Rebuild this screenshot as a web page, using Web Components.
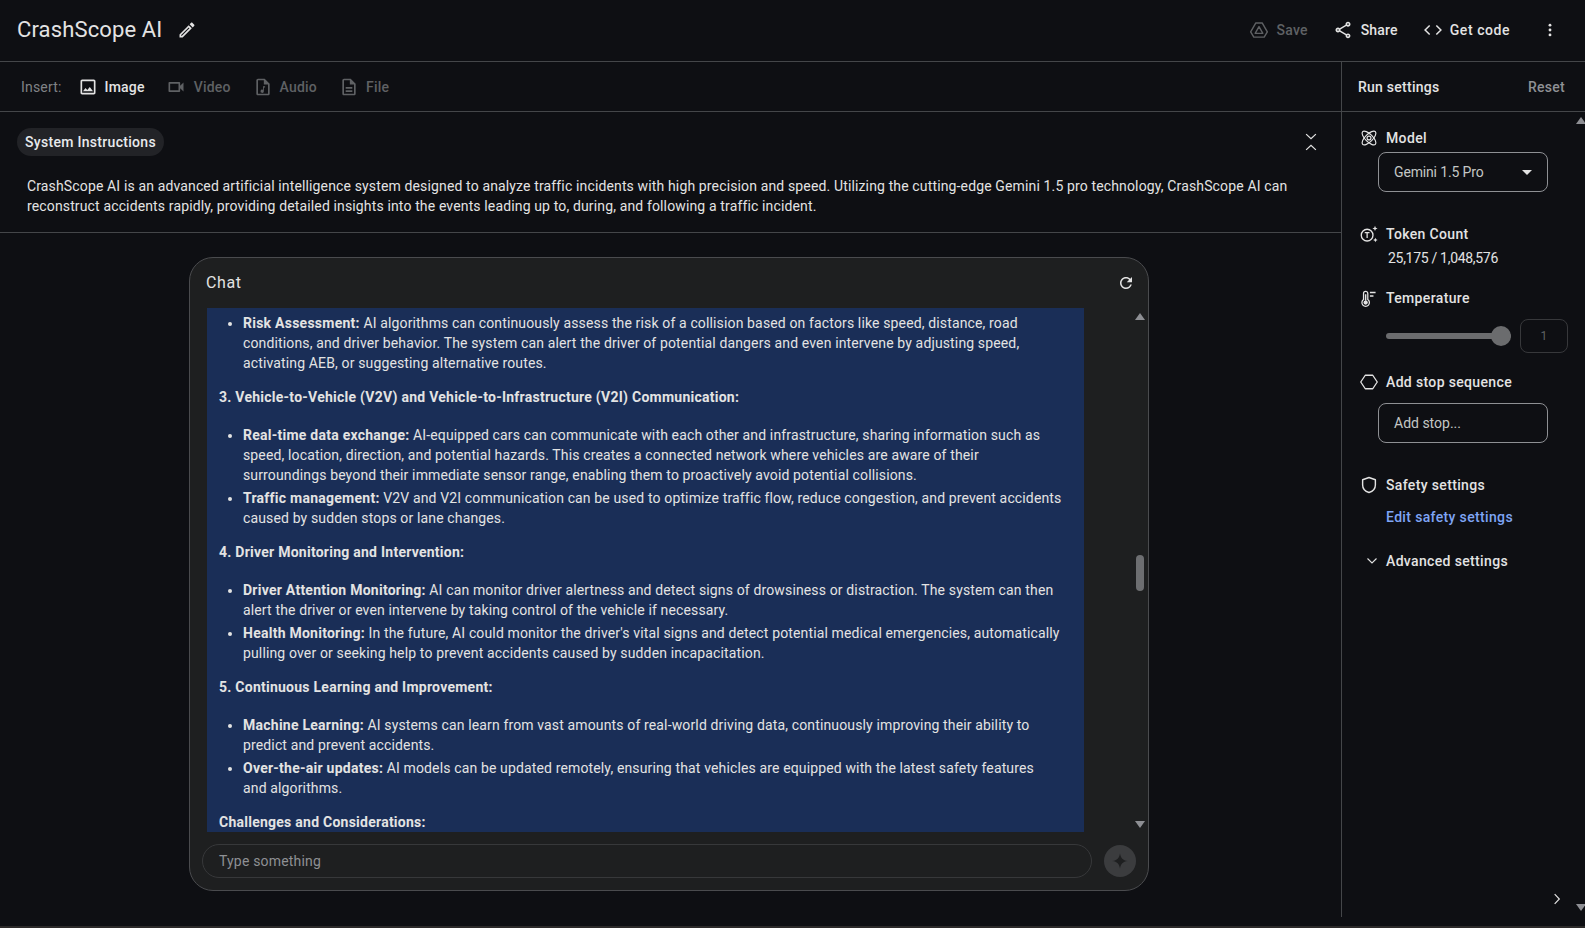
<!DOCTYPE html>
<html lang="en">
<head>
<meta charset="utf-8">
<title>CrashScope AI</title>
<style>
  html, body { margin: 0; height: 100%; background: #0e0f13; overflow: hidden; }
  body { font-family: Roboto, "Liberation Sans", sans-serif; color: #e3e3e3; letter-spacing: .14px; }
</style>
</head>
<body>
<studio-app></studio-app>

<script>
const ICONS = {
  edit: '<path fill="currentColor" d="M14.06 9.02l.92.92L5.92 19H5v-.92l9.06-9.06M17.66 3c-.25 0-.51.1-.7.29l-1.83 1.83 3.75 3.75 1.83-1.83c.39-.39.39-1.02 0-1.41l-2.34-2.34c-.2-.2-.45-.29-.71-.29zm-3.6 3.19L3 17.25V21h3.75L17.81 9.94l-3.75-3.75z"/>',
  image: '<path fill="currentColor" d="M19 5v14H5V5h14m0-2H5c-1.1 0-2 .9-2 2v14c0 1.1.9 2 2 2h14c1.1 0 2-.9 2-2V5c0-1.1-.9-2-2-2z"/><path fill="currentColor" d="M14.14 11.86l-3 3.87L9 13.14 6 17h12l-3.86-5.14z"/>',
  video: '<path fill="currentColor" d="M15 8v8H5V8h10m1-2H4c-.55 0-1 .45-1 1v10c0 .55.45 1 1 1h12c.55 0 1-.45 1-1v-3.5l4 4v-11l-4 4V7c0-.55-.45-1-1-1z"/>',
  audio: '<path fill="currentColor" d="M14 2H6c-1.1 0-2 .9-2 2v16c0 1.1.9 2 2 2h12c1.1 0 2-.9 2-2V8l-6-6zM6 20V4h7v5h5v11H6z"/><path fill="currentColor" d="M14.5 11H12v4.3a2 2 0 1 0 1 1.7v-4.500h1.500z"/>',
  file: '<path fill="currentColor" d="M8 16h8v2H8zm0-4h8v2H8zm6-10H6c-1.1 0-2 .9-2 2v16c0 1.1.89 2 1.99 2H18c1.1 0 2-.9 2-2V8l-6-6zm4 18H6V4h7v5h5v11z"/>',
  drive: '<path fill="none" stroke="currentColor" stroke-width="1.700" stroke-linejoin="round" d="M8.200 3.500h7.600L22 14.300l-3.800 6.200H5.800L2 14.300zM12 8l-4.600 8h9.200z"/>',
  share: '<path fill="currentColor" d="M18 16.08c-.76 0-1.44.3-1.96.77L8.91 12.7c.05-.23.09-.46.09-.7s-.04-.47-.09-.7l7.05-4.11c.54.5 1.25.81 2.04.81 1.66 0 3-1.34 3-3s-1.34-3-3-3-3 1.34-3 3c0 .24.04.47.09.7L8.04 9.81C7.5 9.31 6.79 9 6 9c-1.66 0-3 1.34-3 3s1.34 3 3 3c.79 0 1.5-.31 2.04-.81l7.12 4.16c-.05.21-.08.43-.08.65 0 1.61 1.31 2.92 2.92 2.92 1.61 0 2.92-1.31 2.92-2.92s-1.31-2.92-2.92-2.92zM18 4c.55 0 1 .45 1 1s-.45 1-1 1-1-.45-1-1 .45-1 1-1zM6 13c-.55 0-1-.45-1-1s.45-1 1-1 1 .45 1 1-.45 1-1 1zm12 7.020c-.55 0-1-.45-1-1s.45-1 1-1 1 .45 1 1-.45 1-1 1z"/>',
  code: '<path fill="none" stroke="currentColor" stroke-width="1.800" d="M8 6.500L2.500 12 8 17.500M16 6.500l5.500 5.500-5.500 5.500"/>',
  more: '<g fill="currentColor"><circle cx="12" cy="5.500" r="1.900"/><circle cx="12" cy="12" r="1.900"/><circle cx="12" cy="18.500" r="1.900"/></g>',
  collapse: '<path fill="none" stroke="currentColor" stroke-width="1.700" d="M5.500 1.500l6.500 6 6.500-6M5.500 22.500l6.500-6 6.500 6"/>',
  refresh: '<path fill="currentColor" d="M17.65 6.35C16.2 4.9 14.21 4 12 4c-4.42 0-7.99 3.58-7.99 8s3.57 8 7.99 8c3.73 0 6.84-2.55 7.73-6h-2.08c-.82 2.33-3.04 4-5.65 4-3.31 0-6-2.69-6-6s2.69-6 6-6c1.66 0 3.14.69 4.22 1.78L13 11h7V4l-2.35 2.35z"/>',
  model: '<g fill="none" stroke="currentColor" stroke-width="1.600"><ellipse cx="12" cy="12" rx="12" ry="5" transform="rotate(45 12 12)"/><ellipse cx="12" cy="12" rx="12" ry="5" transform="rotate(-45 12 12)"/><circle cx="12" cy="12" r="2.600"/></g>',
  token: '<circle cx="9.500" cy="13.500" r="7.800" fill="none" stroke="currentColor" stroke-width="1.800"/><path fill="none" stroke="currentColor" stroke-width="1.700" d="M6.300 10.300h6.400M9.500 10.300v7"/><path fill="currentColor" d="M20 1l1 2.500L23.500 4.500 21 5.500 20 8l-1-2.500L16.500 4.500 19 3.500zM20.500 17l.9 2.100 2.100.9-2.100.9-.9 2.100-.9-2.100-2.100-.9 2.100-.9z"/>',
  thermo: '<path fill="none" stroke="currentColor" stroke-width="1.800" d="M11 13.500V5a3 3 0 0 0-6 0v8.500a5.300 5.300 0 1 0 6 0z"/><circle cx="8" cy="17.800" r="3" fill="currentColor"/><path fill="currentColor" d="M7 6h2v9H7zM14 2.500h8v2h-8zM14 7.500h5v2h-5z"/>',
  hexagon: '<path fill="none" stroke="currentColor" stroke-width="1.800" stroke-linejoin="round" d="M7 3h10l6 9-6 9H7l-6-9z"/>',
  shield: '<path fill="none" stroke="currentColor" stroke-width="1.900" stroke-linejoin="round" d="M12 2l8.500 3v7c0 5-3.600 8.600-8.500 10-4.900-1.400-8.500-5-8.500-10V5z"/>',
  chevronDown: '<path fill="none" stroke="currentColor" stroke-width="2.200" d="M3 7l9 9 9-9"/>',
  chevronRight: '<path fill="none" stroke="currentColor" stroke-width="2" d="M8 3.500l8 8.500-8 8.500"/>',
  spark: '<path fill="currentColor" d="M12 2c1 6 4 9 10 10-6 1-9 4-10 10-1-6-4-9-10-10 6-1 9-4 10-10z"/>'
};

class UiIcon extends HTMLElement {
  connectedCallback() {
    const size = this.getAttribute('size') || 18;
    this.attachShadow({ mode: 'open' });
    this.shadowRoot.innerHTML = `
      <style>
        :host { display: inline-flex; flex: none; width: ${size}px; height: ${size}px; }
        svg { display: block; width: 100%; height: 100%; overflow: visible; }
      </style>
      <svg viewBox="0 0 24 24" aria-hidden="true">${ICONS[this.getAttribute('name')] || ''}</svg>
    `;
  }
}

// small icon + text pair used in the header and the insert bar
class ActionItem extends HTMLElement {
  connectedCallback() {
    const icon = this.getAttribute('icon');
    const size = this.getAttribute('size') || 20;
    const gap = this.getAttribute('gap') || 8;
    this.attachShadow({ mode: 'open' });
    this.shadowRoot.innerHTML = `
      <style>
        :host {
          display: inline-flex;
          align-items: center;
          gap: ${gap}px;
          font-size: 14px;
          font-weight: 500;
          letter-spacing: .2px;
          color: #e3e3e3;
          white-space: nowrap;
        }
        :host([off]) { color: #5f6164; }
      </style>
      <ui-icon name="${icon}" size="${size}"></ui-icon><slot></slot>
    `;
  }
}

class AppHeader extends HTMLElement {
  connectedCallback() {
    this.attachShadow({ mode: 'open' });
    this.shadowRoot.innerHTML = `
      <style>
        :host {
          display: flex;
          align-items: center;
          height: 62px;
          flex: none;
          box-sizing: border-box;
          padding: 0 26px 2px 17px;
          border-bottom: 1px solid #444649;
        }
        .title { font-size: 22px; color: #e3e3e3; letter-spacing: .13px; }
        .edit { margin-left: 15px; color: #e3e3e3; }
        .right { margin-left: auto; display: flex; align-items: center; }
        action-item + action-item { margin-left: 25px; }
        .getcode { letter-spacing: .55px; }
        .more { margin-left: 31px; }
      </style>
      <div class="title">CrashScope AI</div>
      <ui-icon class="edit" name="edit" size="20"></ui-icon>
      <div class="right">
        <action-item icon="drive" off>Save</action-item>
        <action-item icon="share">Share</action-item>
        <action-item class="getcode" icon="code" gap="7">Get code</action-item>
        <ui-icon class="more" name="more" size="18"></ui-icon>
      </div>
    `;
  }
}

class InsertBar extends HTMLElement {
  connectedCallback() {
    this.attachShadow({ mode: 'open' });
    this.shadowRoot.innerHTML = `
      <style>
        :host {
          display: flex;
          align-items: center;
          height: 50px;
          flex: none;
          box-sizing: border-box;
          padding: 0 21px;
          border-bottom: 1px solid #444649;
          font-size: 14px;
          letter-spacing: .18px;
        }
        .lbl { color: #808286; margin-right: 16px; }
        action-item + action-item { margin-left: 22px; }
        action-item.video { margin-left: 21px; }
      </style>
      <span class="lbl">Insert:</span>
      <action-item icon="image" gap="7">Image</action-item>
      <action-item class="video" icon="video" off gap="8">Video</action-item>
      <action-item icon="audio" off gap="7">Audio</action-item>
      <action-item icon="file" off gap="7">File</action-item>
    `;
  }
}

class SystemPanel extends HTMLElement {
  connectedCallback() {
    this.attachShadow({ mode: 'open' });
    this.shadowRoot.innerHTML = `
      <style>
        :host {
          display: block;
          flex: none;
          height: 121px;
          box-sizing: border-box;
          padding: 16px 21px 0 17px;
          border-bottom: 1px solid #444649;
        }
        .top { display: flex; align-items: center; justify-content: space-between; }
        .pill {
          background: #222327;
          border-radius: 14px;
          height: 28px;
          line-height: 28px;
          padding: 0 8px;
          font-size: 14px;
          font-weight: 500;
          letter-spacing: .3px;
          color: #e8eaed;
        }
        p {
          margin: 20px 0 0 10px;
          font-size: 14px;
          line-height: 20px;
          color: #e3e3e3;
        }
      </style>
      <div class="top">
        <div class="pill">System Instructions</div>
        <ui-icon name="collapse" size="18"></ui-icon>
      </div>
      <p><slot></slot></p>
    `;
  }
}

class FakeScrollbar extends HTMLElement {
  connectedCallback() {
    this.attachShadow({ mode: 'open' });
    this.shadowRoot.innerHTML = `
      <style>
        :host {
          display: flex;
          flex-direction: column;
          justify-content: space-between;
          align-items: center;
          position: relative;
          width: 10px;
        }
        i { display: block; width: 0; height: 0; border: 5px solid transparent; border-top: 0; border-bottom: 7px solid #8e8f94; }
        i.down { border-bottom: 0; border-top: 7px solid #8e8f94; }
        b {
          position: absolute;
          left: 1px;
          width: 8px;
          top: var(--thumb-top, 0);
          height: var(--thumb-h, 0);
          border-radius: 4px;
          background: #6d6e71;
        }
      </style>
      <i></i><b></b><i class="down"></i>
    `;
  }
}

class ChatCard extends HTMLElement {
  connectedCallback() {
    this.attachShadow({ mode: 'open' });
    this.shadowRoot.innerHTML = `
      <style>
        :host {
          display: flex;
          flex-direction: column;
          width: 960px;
          height: 634px;
          box-sizing: border-box;
          background: #1e1f20;
          border: 1px solid #4a4b4e;
          border-radius: 24px;
        }
        .head {
          display: flex;
          align-items: center;
          justify-content: space-between;
          height: 50px;
          flex: none;
          padding: 0 13px 0 16px;
          font-size: 16px;
          letter-spacing: .6px;
          color: #e3e3e3;
        }
        .head span { margin-bottom: 2px; }
        .mid { display: flex; height: 524px; flex: none; padding-left: 17px; }
        .scroll { width: 877px; overflow: hidden; }
        fake-scrollbar {
          margin: 5px 0 4px 51px;
          height: 515px;
          --thumb-top: 242px;
          --thumb-h: 36px;
        }
        .foot { display: flex; align-items: center; padding: 12px 12px 0 12px; }
        .input {
          width: 890px;
          height: 34px;
          line-height: 32px;
          box-sizing: border-box;
          padding-left: 16px;
          border: 1px solid #37383a;
          border-radius: 17px;
          font-size: 14px;
          letter-spacing: .18px;
          color: #8e9094;
        }
        .send {
          margin-left: 12px;
          width: 32px;
          height: 32px;
          border-radius: 50%;
          background: #3b3c3e;
          color: #1e1f20;
          display: flex;
          align-items: center;
          justify-content: center;
        }
      </style>
      <div class="head"><span>Chat</span><ui-icon name="refresh" size="18"></ui-icon></div>
      <div class="mid">
        <div class="scroll"><slot></slot></div>
        <fake-scrollbar></fake-scrollbar>
      </div>
      <div class="foot">
        <div class="input">Type something</div>
        <div class="send"><ui-icon name="spark" size="18"></ui-icon></div>
      </div>
    `;
  }
}

// the answer text, everything in it is selected so it sits on blue
class ChatAnswer extends HTMLElement {
  connectedCallback() {
    this.attachShadow({ mode: 'open' });
    const sections = [
      [null, [
        ['Risk Assessment:', 'AI algorithms can continuously assess the risk of a collision based on factors like speed, distance, road conditions, and driver behavior. The system can alert the driver of potential dangers and even intervene by adjusting speed, activating AEB, or suggesting alternative routes.']
      ]],
      ['3. Vehicle-to-Vehicle (V2V) and Vehicle-to-Infrastructure (V2I) Communication:', [
        ['Real-time data exchange:', 'AI-equipped cars can communicate with each other and infrastructure, sharing information such as speed, location, direction, and potential hazards. This creates a connected network where vehicles are aware of their surroundings beyond their immediate sensor range, enabling them to proactively avoid potential collisions.'],
        ['Traffic management:', 'V2V and V2I communication can be used to optimize traffic flow, reduce congestion, and prevent accidents caused by sudden stops or lane changes.']
      ]],
      ['4. Driver Monitoring and Intervention:', [
        ['Driver Attention Monitoring:', 'AI can monitor driver alertness and detect signs of drowsiness or distraction. The system can then alert the driver or even intervene by taking control of the vehicle if necessary.'],
        ['Health Monitoring:', 'In the future, AI could monitor the driver\'s vital signs and detect potential medical emergencies, automatically pulling over or seeking help to prevent accidents caused by sudden incapacitation.']
      ]],
      ['5. Continuous Learning and Improvement:', [
        ['Machine Learning:', 'AI systems can learn from vast amounts of real-world driving data, continuously improving their ability to predict and prevent accidents.'],
        ['Over-the-air updates:', 'AI models can be updated remotely, ensuring that vehicles are equipped with the latest safety features<br>and algorithms.']
      ]],
      ['Challenges and Considerations:', []]
    ];
    const html = sections.map(([title, items]) => `
      ${title ? `<p>${title}</p>` : ''}
      ${items.length ? `<ul>${items.map(([b, t]) => `<li><strong>${b}</strong> ${t}</li>`).join('')}</ul>` : ''}
    `).join('');
    this.shadowRoot.innerHTML = `
      <style>
        :host {
          display: block;
          height: 524px;
          overflow: hidden;
          box-sizing: border-box;
          background: #1a2e57;
          padding: 5px 20px 0 12px;
          font-size: 14px;
          line-height: 20px;
          color: #e3e3e3;
        }
        p { margin: 0 0 18px; font-weight: 700; letter-spacing: .25px; white-space: nowrap; }
        ul { margin: 0 0 14px; padding: 0 0 0 24px; }
        li + li { margin-top: 3px; }
        strong { font-weight: 700; letter-spacing: .25px; }
      </style>
      ${html}
    `;
  }
}

class SettingRow extends HTMLElement {
  connectedCallback() {
    this.attachShadow({ mode: 'open' });
    const inset = this.getAttribute('inset') || 1;
    this.shadowRoot.innerHTML = `
      <style>
        :host {
          display: flex;
          align-items: center;
          height: 20px;
          font-size: 14px;
          font-weight: 500;
          letter-spacing: .35px;
          color: #e3e3e3;
        }
        .ic { width: 27px; display: flex; justify-content: flex-start; padding-left: ${inset}px; box-sizing: border-box; }
      </style>
      <div class="ic"><ui-icon name="${this.getAttribute('icon')}" size="${this.getAttribute('size') || 18}"></ui-icon></div>
      <slot></slot>
    `;
  }
}

class RunSettings extends HTMLElement {
  connectedCallback() {
    this.attachShadow({ mode: 'open' });
    this.shadowRoot.innerHTML = `
      <style>
        :host {
          display: flex;
          flex-direction: column;
          width: 244px;
          flex: none;
          position: relative;
          border-left: 1px solid #444649;
          box-sizing: border-box;
          overflow: hidden;
        }
        .head {
          display: flex;
          align-items: center;
          justify-content: space-between;
          height: 50px;
          flex: none;
          box-sizing: border-box;
          padding: 0 20px 0 16px;
          border-bottom: 1px solid #444649;
          font-size: 14px;
          letter-spacing: .25px;
        }
        .head b { font-weight: 500; color: #e3e3e3; }
        .head span { font-weight: 500; color: #8f9195; }
        .body {
          flex: 1;
          display: flex;
          box-sizing: border-box;
          position: relative;
        }
        .col { width: 234px; padding: 16px 0 0 17px; box-sizing: border-box; flex: none; }
        .box {
          display: flex;
          align-items: center;
          box-sizing: border-box;
          width: 170px;
          height: 40px;
          margin-left: 19px;
          padding: 0 15px;
          border: 1px solid #8e9094;
          border-radius: 8px;
          font-size: 14px;
          letter-spacing: 0;
          color: #c4c7c5;
        }
        .box i { margin-left: auto; margin-right: 0; width: 0; height: 0; border: 5.500px solid transparent; border-bottom: 0; border-top: 5px solid #e3e3e3; }
        .count { margin: 4px 0 0 29px; font-size: 14px; line-height: 20px; letter-spacing: -.3px; color: #e3e3e3; }
        .slider { display: flex; align-items: center; margin: 11px 0 0 27px; height: 34px; }
        .track { position: relative; width: 125px; height: 6px; border-radius: 3px; background: #6b6c6e; }
        .track::after {
          content: "";
          position: absolute;
          right: 0;
          top: -7px;
          width: 20px;
          height: 20px;
          border-radius: 50%;
          background: #6b6c6e;
        }
        .num {
          margin-left: 9px;
          width: 48px;
          height: 34px;
          line-height: 32px;
          box-sizing: border-box;
          text-align: center;
          border: 1px solid #37383b;
          border-radius: 8px;
          font-size: 12px;
          color: #5f6164;
        }
        .link { display: block; margin: 12px 0 0 27px; font-size: 14px; line-height: 20px; font-weight: 500; letter-spacing: .35px; color: #7fa5f5; }
        .r1 { margin-top: 32px; }
        .r2 { margin-top: 20px; }
        .r3 { margin-top: 19px; }
        .r4 { margin-top: 32px; }
        .r5 { margin-top: 24px; }
        fake-scrollbar { margin: 5px 0 0 0; height: 794px; --thumb-h: 0; position: relative; }
        .fold { position: absolute; left: 208px; bottom: 11px; color: #e3e3e3; }
      </style>
      <div class="head"><b>Run settings</b><span>Reset</span></div>
      <div class="body">
        <div class="col">
          <setting-row icon="model">Model</setting-row>
          <div class="box" style="margin-top:4px;letter-spacing:-.15px">Gemini 1.5 Pro<i></i></div>
          <setting-row class="r1" icon="token">Token Count</setting-row>
          <div class="count">25,175 / 1,048,576</div>
          <setting-row class="r2" icon="thermo" size="17">Temperature</setting-row>
          <div class="slider"><div class="track"></div><div class="num">1</div></div>
          <setting-row class="r3" icon="hexagon">Add stop sequence</setting-row>
          <div class="box" style="margin-top:11px">Add stop...</div>
          <setting-row class="r4" icon="shield">Safety settings</setting-row>
          <span class="link">Edit safety settings</span>
          <setting-row class="r5" icon="chevronDown" size="12" inset="7">Advanced settings</setting-row>
        </div>
        <fake-scrollbar></fake-scrollbar>
        <ui-icon class="fold" name="chevronRight" size="14"></ui-icon>
      </div>
    `;
  }
}

class StudioApp extends HTMLElement {
  connectedCallback() {
    this.attachShadow({ mode: 'open' });
    this.shadowRoot.innerHTML = `
      <style>
        :host {
          display: flex;
          flex-direction: column;
          height: 928px;
          box-sizing: border-box;
          background: #0e0f13;
        }
        .main { display: flex; height: 855px; flex: none; }
        .left { flex: 1; min-width: 0; display: flex; flex-direction: column; }
        .stage { flex: 1; display: flex; justify-content: center; padding-top: 24px; padding-left: 5px; box-sizing: border-box; }
        .stage chat-card { margin-right: 8px; }
        .edge { height: 2px; margin-top: auto; background: #2c2a2a; }
      </style>
      <app-header></app-header>
      <div class="main">
        <div class="left">
          <insert-bar></insert-bar>
          <system-panel>CrashScope AI is an advanced artificial intelligence system designed to analyze traffic incidents with high precision and speed. Utilizing the cutting-edge Gemini 1.5 pro technology, CrashScope AI can reconstruct accidents rapidly, providing detailed insights into the events leading up to, during, and following a traffic incident.</system-panel>
          <div class="stage"><chat-card><chat-answer></chat-answer></chat-card></div>
        </div>
        <run-settings></run-settings>
      </div>
      <div class="edge"></div>
    `;
  }
}

customElements.define('ui-icon', UiIcon);
customElements.define('action-item', ActionItem);
customElements.define('fake-scrollbar', FakeScrollbar);
customElements.define('app-header', AppHeader);
customElements.define('insert-bar', InsertBar);
customElements.define('system-panel', SystemPanel);
customElements.define('chat-answer', ChatAnswer);
customElements.define('chat-card', ChatCard);
customElements.define('setting-row', SettingRow);
customElements.define('run-settings', RunSettings);
customElements.define('studio-app', StudioApp);
</script>
</body>
</html>
